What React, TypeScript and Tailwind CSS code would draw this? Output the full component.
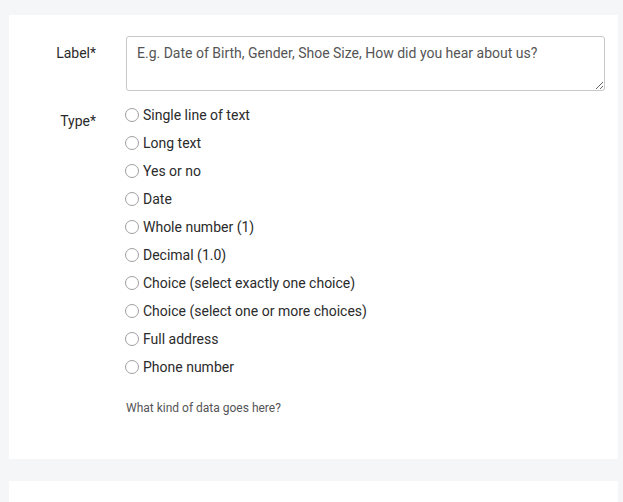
import React from 'react';

const types = [
  'Single line of text',
  'Long text',
  'Yes or no',
  'Date',
  'Whole number (1)',
  'Decimal (1.0)',
  'Choice (select exactly one choice)',
  'Choice (select one or more choices)',
  'Full address',
  'Phone number',
];

const App: React.FC = () => {
  return (
    <div className="min-h-[502px] bg-[#f5f6f8] pt-[15px] pl-[9px] pr-[5px] font-['Roboto',sans-serif] text-[14px] text-[#2b2b2b]">
      {/* Field card */}
      <div className="bg-white pt-[21px] pb-[43px] pr-[13px]">
        <div className="flex">
          <label className="w-[87px] shrink-0 text-right pt-[7px] leading-[20px]">Label*</label>
          <textarea
            className="ml-[30px] h-[55px] flex-1 rounded-[3px] border border-[#c8c8c8] px-[10px] py-[6px] leading-[20px] text-[#333] placeholder:text-[#555] outline-none"
            placeholder="E.g. Date of Birth, Gender, Shoe Size, How did you hear about us?"
          />
        </div>

        <div className="mt-[10px] flex">
          <label className="w-[87px] shrink-0 text-right pt-[10px] leading-[20px]">Type*</label>
          <div className="ml-[30px] flex-1">
            {types.map((t) => (
              <label key={t} className="flex h-[28px] items-center">
                <span className="ml-[-1px] h-[14px] w-[14px] shrink-0 rounded-full border border-[#a0a0a0] bg-white" />
                <span className="ml-[4px] leading-[20px]">{t}</span>
              </label>
            ))}
            <p className="mt-[19px] text-[12px] leading-[16px] text-[#555]">What kind of data goes here?</p>
          </div>
        </div>
      </div>

      {/* Next card */}
      <div className="mt-[22px] h-[40px] bg-white" />
    </div>
  );
};

export default App;
